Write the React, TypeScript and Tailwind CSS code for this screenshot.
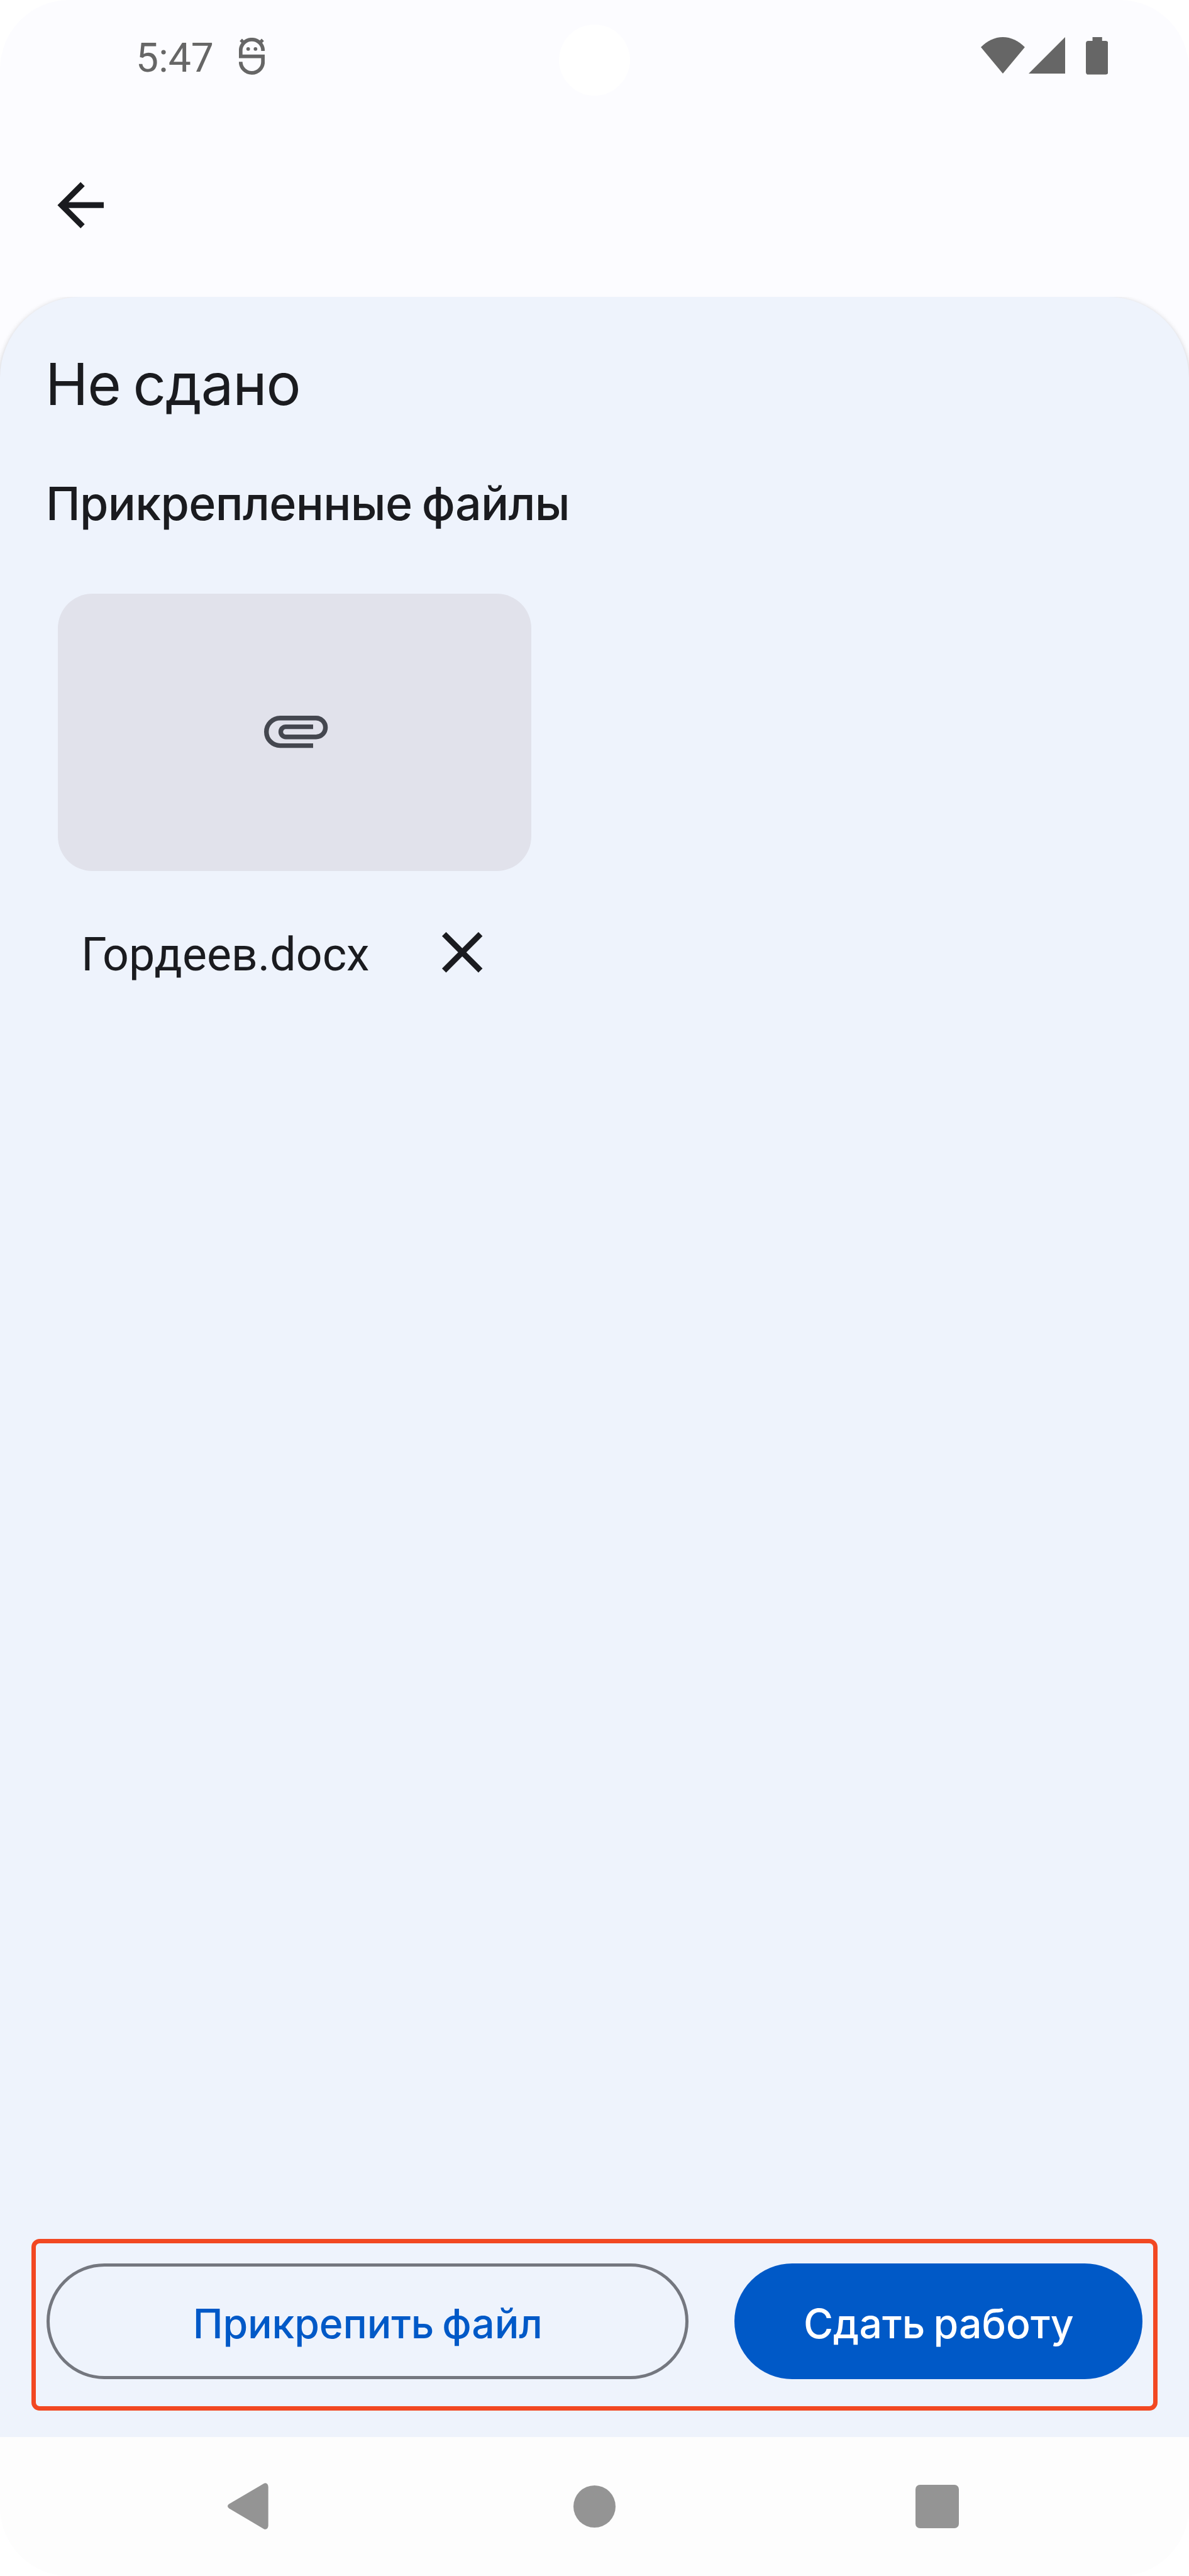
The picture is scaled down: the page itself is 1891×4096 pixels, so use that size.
function DebugIcon() {
  return (
    <svg viewBox="0 0 148 211" className="h-[58.6px] w-[41px]" fill="none" stroke="#666666" strokeWidth="21">
      <path d="M138 76V74A64 64 0 0 0 10 74V106.5H138V137A64 64 0 0 1 10 138" />
      <path d="M11 12L32 33M137 12L116 33" strokeWidth="19" />
      <circle cx="53" cy="64" r="10.5" fill="#666666" stroke="none" />
      <circle cx="95" cy="64" r="10.5" fill="#666666" stroke="none" />
    </svg>
  );
}

function StatusBar() {
  return (
    <div className="relative flex h-[160px] items-start">
      <span className="ml-[216px] mt-[50px] w-[164.4px] font-[Roboto,sans-serif] text-[64.3px] leading-[84px] text-[#666666]">
        5:47
      </span>
      <div className="mt-[60.2px]">
        <DebugIcon />
      </div>
      <div className="ml-auto mr-[129px] mt-[59.3px] flex items-start">
        {/* Wi-Fi */}
        <svg viewBox="0 0 252 209" className="h-[58px] w-[69.9px]" fill="#666666">
          <path d="M126 209L0 58C36 21 80 0 126 0S216 21 252 58Z" />
        </svg>
        {/* Mobile signal */}
        <svg viewBox="0 0 209 209" className="ml-[6.1px] h-[58px] w-[58px]" fill="#666666">
          <path d="M209 0V209H0Z" />
        </svg>
        {/* Battery */}
        <svg viewBox="0 0 128 215" className="ml-[32.7px] h-[59.6px] w-[35.5px]" fill="#666666">
          <path d="M38 0H93V22H114Q128 22 128 37V200Q128 215 114 215H14Q0 215 0 200V37Q0 22 14 22H38Z" />
        </svg>
      </div>
      {/* Camera cut-out */}
      <div className="absolute left-[889px] top-[38.5px] size-[113px] rounded-full bg-white" />
    </div>
  );
}

function Attachment() {
  return (
    <div className="ml-[91.9px] mt-[98.2px] w-[753.6px]">
      <div className="flex h-[441px] items-center justify-center rounded-[55px] bg-[#e1e2eb]">
        <svg
          viewBox="0 0 121.8 61.8"
          className="ml-[5px] h-[51.4px] w-[101.4px]"
          fill="none"
          stroke="#44474f"
          strokeWidth="8.9"
        >
          <path d="M93.7 57.3H30.8A26.4 26.4 0 0 1 30.8 4.5H99.3A18 18 0 0 1 99.3 40.5H41.5A9.65 9.65 0 0 1 41.5 21.2H93.7" />
        </svg>
      </div>
      <div className="mt-[74px] flex items-start">
        <span className="ml-[37px] mt-[15px] w-[551.6px] font-[Roboto,sans-serif] text-[73.5px] leading-[88px]">
          Гордеев.docx
        </span>
        <button type="button" aria-label="Удалить">
          <svg viewBox="0 0 24 24" className="size-[110.4px]" fill="#1a1b1f">
            <path d="M19 6.41L17.59 5 12 10.59 6.41 5 5 6.41 10.59 12 5 17.59 6.41 19 12 13.41 17.59 19 19 17.59 13.41 12z" />
          </svg>
        </button>
      </div>
    </div>
  );
}

function Actions() {
  return (
    <div className="mx-[50px] mb-[42px] flex h-[273px] rounded-[13px] border-[7px] border-[#f24822] pl-[17px] pr-[16.6px] pt-[32.3px] text-[64.3px] font-medium leading-[78px]">
      <button
        type="button"
        className="flex h-[184px] w-[1021.4px] items-center justify-center rounded-full border-[5px] border-[#74777f] pt-[8px] tracking-[-0.12px] text-[#0059c7] [word-spacing:-4px]"
      >
        Прикрепить файл
      </button>
      <button
        type="button"
        className="ml-auto flex h-[184px] w-[649px] items-center justify-center rounded-full bg-[#0059c7] pt-[8px] tracking-[0.05px] text-white [word-spacing:-4px]"
      >
        Сдать работу
      </button>
    </div>
  );
}

function NavBar() {
  return (
    <div className="flex h-[221px] items-center bg-[#fdfdfd] pl-[362px]">
      <svg viewBox="0 0 64.7 74.1" className="h-[74.1px] w-[64.7px]" fill="#949494">
        <path d="M2.3 33.6L57.2 1.2Q61 -1 63.4 2Q64.7 4 64.7 6.5V67.6Q64.7 70 63.4 72.1Q61 75.1 57.2 72.9L2.3 40.5Q0 39 0 37.05Q0 35 2.3 33.6Z" />
      </svg>
      <div className="ml-[485.3px] size-[67px] rounded-full bg-[#949494]" />
      <div className="ml-[477px] size-[69.5px] rounded-[7px] bg-[#949494]" />
    </div>
  );
}

export default function App() {
  return (
    <div className="h-[4096px] w-[1891px] bg-white">
      <div className="flex h-full flex-col overflow-hidden rounded-[110px] bg-[#fcfcff] font-[Inter,sans-serif] text-[#1a1b1f]">
        <StatusBar />
        <header className="h-[312.4px] pl-[73.4px] pt-[110.5px]">
          <button type="button" aria-label="Назад" className="block">
            <svg viewBox="0 0 24 24" className="size-[110.4px]" fill="#1a1b1f">
              <path d="M20 11H7.83l5.59-5.59L12 4l-8 8 8 8 1.41-1.41L7.83 13H20v-2z" />
            </svg>
          </button>
        </header>
        <div className="flex flex-1 flex-col overflow-hidden">
          <main className="flex flex-1 flex-col rounded-t-[129px] bg-[#eef3fc] shadow-[0_2px_8px_rgba(0,0,0,0.2)]">
            <h1 className="ml-[72px] mt-[83.5px] text-[92px] leading-[110px] tracking-[-1.1px] [word-spacing:-5px]">
              Не сдано
            </h1>
            <h2 className="ml-[73px] mt-[91.6px] text-[73.5px] font-medium leading-[88px] tracking-[-0.68px] [word-spacing:-3.5px]">
              Прикрепленные файлы
            </h2>
            <Attachment />
            <div className="flex-1" />
            <Actions />
          </main>
        </div>
        <NavBar />
      </div>
    </div>
  );
}
